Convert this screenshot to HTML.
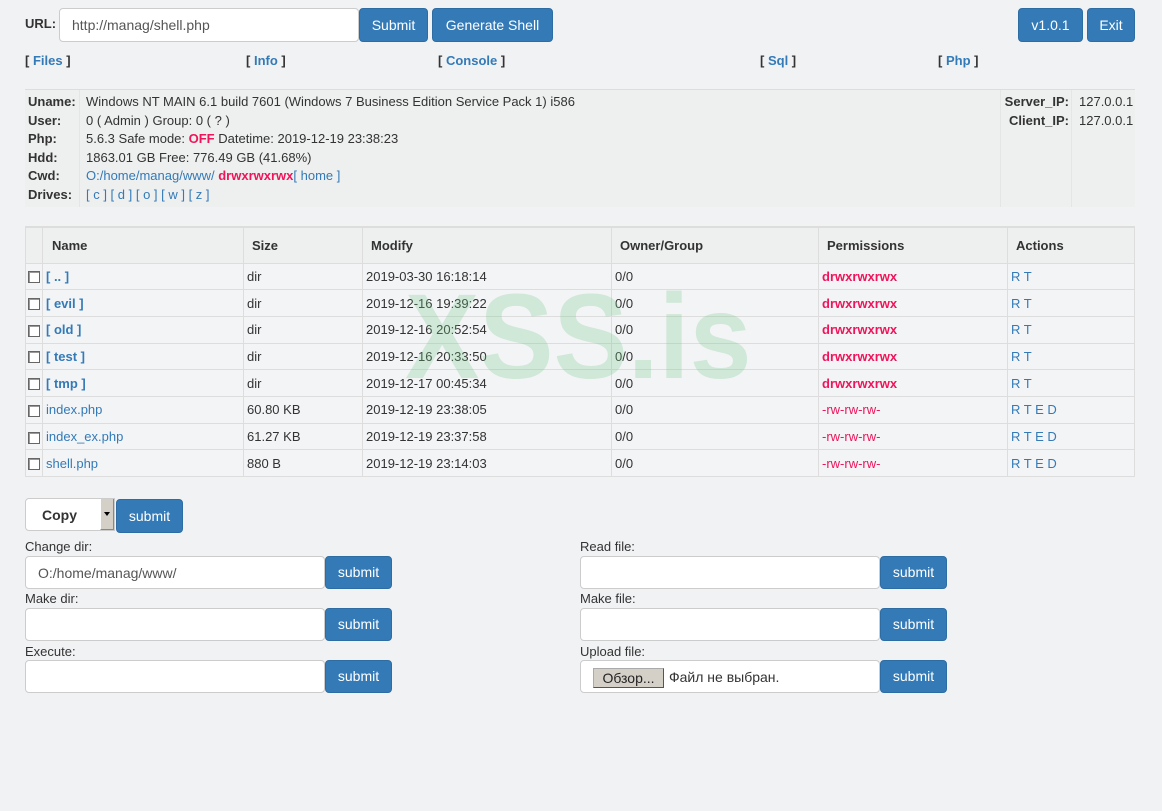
<!DOCTYPE html>
<html><head><meta charset="utf-8"><style>
*{box-sizing:border-box;margin:0;padding:0}
body{width:1162px;height:811px;background:#f1f2f4;font-family:"Liberation Sans",Arial,sans-serif;font-size:13px;color:#333;position:relative;overflow:hidden}
.a{position:absolute}
.btn{position:absolute;background:#337ab7;color:#fff;border:1px solid #2e6da4;border-radius:4px;font-size:14px;text-align:center}
.inp{position:absolute;background:#fff;border:1px solid #ccc;border-radius:4px;font-size:14px;color:#555}
.nav{position:absolute;top:53px;font-weight:bold;font-size:13px;color:#333}
.nav span{color:#337ab7}
.lbl{position:absolute;font-size:13px;color:#333}
a,.lk{color:#337ab7;text-decoration:none}
.pk{color:#f0145a;font-weight:bold}
table{border-collapse:collapse}
td{border:1px solid #ddd;padding:0 3px;height:26.7px;font-size:13px;vertical-align:middle}
th{border:1px solid #ddd;border-top:2px solid #ddd;text-align:left;font-size:13px;color:#333;height:36px;background:#eeefef;padding:0 8px}
tr.r td{background:#f3f4f6}
.cb{display:inline-block;width:12px;height:12px;border:1px solid #666;background:#fff;box-shadow:inset 1px 1px 0 #999;vertical-align:middle}
.dn{color:#337ab7;font-weight:bold}
</style></head><body>
<div class="a" style="left:25px;top:16px;font-weight:bold;font-size:13px">URL:</div>
<div class="inp" style="left:59px;top:8px;width:300px;height:34px;padding:8px 12px">http://manag/shell.php</div>
<div class="btn" style="left:359px;top:8px;width:69px;height:34px;line-height:32px">Submit</div>
<div class="btn" style="left:432px;top:8px;width:121px;height:34px;line-height:32px">Generate Shell</div>
<div class="btn" style="left:1018px;top:8px;width:65px;height:34px;line-height:32px">v1.0.1</div>
<div class="btn" style="left:1087px;top:8px;width:48px;height:34px;line-height:32px">Exit</div>

<div class="nav" style="left:25px">[ <span>Files</span> ]</div>
<div class="nav" style="left:246px">[ <span>Info</span> ]</div>
<div class="nav" style="left:438px">[ <span>Console</span> ]</div>
<div class="nav" style="left:760px">[ <span>Sql</span> ]</div>
<div class="nav" style="left:938px">[ <span>Php</span> ]</div>

<div class="a" style="left:25px;top:89px;width:1110px;height:118px;background:#eeefef;border-top:1px solid #ddd"></div>
<div class="a" style="left:79px;top:90px;width:1px;height:117px;background:#e4e5e5"></div>
<div class="a" style="left:1000px;top:90px;width:1px;height:117px;background:#e4e5e5"></div>
<div class="a" style="left:1071px;top:90px;width:1px;height:117px;background:#e4e5e5"></div>
<div class="a" style="left:28px;top:93px;font-weight:bold;line-height:18.6px">Uname:<br>User:<br>Php:<br>Hdd:<br>Cwd:<br>Drives:</div>
<div class="a" style="left:86px;top:93px;line-height:18.6px;white-space:nowrap">Windows NT MAIN 6.1 build 7601 (Windows 7 Business Edition Service Pack 1) i586<br>0 ( Admin ) Group: 0 ( ? )<br>5.6.3 Safe mode: <span class="pk">OFF</span> Datetime: 2019-12-19 23:38:23<br>1863.01 GB Free: 776.49 GB (41.68%)<br><span class="lk">O:/home/manag/www/</span> <span class="pk">drwxrwxrwx</span><span class="lk">[ home ]</span><br><span class="lk">[ c ] [ d ] [ o ] [ w ] [ z ]</span></div>
<div class="a" style="left:990px;top:93px;width:79px;text-align:right;font-weight:bold;line-height:18.6px">Server_IP:<br>Client_IP:</div>
<div class="a" style="left:1079px;top:93px;line-height:18.6px">127.0.0.1<br>127.0.0.1</div>

<table class="a" style="left:25px;top:226px;width:1110px">
<tr><th style="width:17px;padding:0"></th><th style="width:201px;padding-left:9px">Name</th><th style="width:119px">Size</th><th style="width:249px">Modify</th><th style="width:207px">Owner/Group</th><th style="width:189px">Permissions</th><th>Actions</th></tr>
<tr class="r"><td style="padding:0 2px"><span class="cb"></span></td><td><span class="dn">[ .. ]</span></td><td>dir</td><td>2019-03-30 16:18:14</td><td>0/0</td><td class="pk">drwxrwxrwx</td><td class="lk">R T</td></tr>
<tr class="r"><td style="padding:0 2px"><span class="cb"></span></td><td><span class="dn">[ evil ]</span></td><td>dir</td><td>2019-12-16 19:39:22</td><td>0/0</td><td class="pk">drwxrwxrwx</td><td class="lk">R T</td></tr>
<tr class="r"><td style="padding:0 2px"><span class="cb"></span></td><td><span class="dn">[ old ]</span></td><td>dir</td><td>2019-12-16 20:52:54</td><td>0/0</td><td class="pk">drwxrwxrwx</td><td class="lk">R T</td></tr>
<tr class="r"><td style="padding:0 2px"><span class="cb"></span></td><td><span class="dn">[ test ]</span></td><td>dir</td><td>2019-12-16 20:33:50</td><td>0/0</td><td class="pk">drwxrwxrwx</td><td class="lk">R T</td></tr>
<tr class="r"><td style="padding:0 2px"><span class="cb"></span></td><td><span class="dn">[ tmp ]</span></td><td>dir</td><td>2019-12-17 00:45:34</td><td>0/0</td><td class="pk">drwxrwxrwx</td><td class="lk">R T</td></tr>
<tr class="r"><td style="padding:0 2px"><span class="cb"></span></td><td class="lk">index.php</td><td>60.80 KB</td><td>2019-12-19 23:38:05</td><td>0/0</td><td class="pk" style="font-weight:normal">-rw-rw-rw-</td><td class="lk">R T E D</td></tr>
<tr class="r"><td style="padding:0 2px"><span class="cb"></span></td><td class="lk">index_ex.php</td><td>61.27 KB</td><td>2019-12-19 23:37:58</td><td>0/0</td><td class="pk" style="font-weight:normal">-rw-rw-rw-</td><td class="lk">R T E D</td></tr>
<tr class="r"><td style="padding:0 2px"><span class="cb"></span></td><td class="lk">shell.php</td><td>880 B</td><td>2019-12-19 23:14:03</td><td>0/0</td><td class="pk" style="font-weight:normal">-rw-rw-rw-</td><td class="lk">R T E D</td></tr>
</table>
<div class="a" style="left:405px;top:266px;font-size:121px;font-weight:bold;color:rgba(120,200,135,0.28);transform:scaleX(0.92);transform-origin:left top;line-height:140px;pointer-events:none">XSS.is</div>

<div class="a" style="left:25px;top:498px;width:90px;height:33px;background:#fff;border:1px solid #ccc;border-radius:4px 0 0 4px"></div>
<div class="a" style="left:42px;top:507px;font-weight:bold;font-size:14px">Copy</div>
<div class="a" style="left:100px;top:499px;width:14px;height:31px;background:#d4d0c8;border-left:1px solid #fff;border-right:1px solid #888;border-bottom:1px solid #888"></div>
<div class="a" style="left:104px;top:512px;width:0;height:0;border-left:3px solid transparent;border-right:3px solid transparent;border-top:4px solid #000"></div>
<div class="btn" style="left:116px;top:499px;width:67px;height:34px;line-height:32px">submit</div>

<div class="lbl" style="left:25px;top:539px">Change dir:</div>
<div class="inp" style="left:25px;top:556px;width:300px;height:33px;padding:8px 12px">O:/home/manag/www/</div>
<div class="btn" style="left:325px;top:556px;width:67px;height:33px;line-height:31px">submit</div>
<div class="lbl" style="left:25px;top:591px">Make dir:</div>
<div class="inp" style="left:25px;top:608px;width:300px;height:33px"></div>
<div class="btn" style="left:325px;top:608px;width:67px;height:33px;line-height:31px">submit</div>
<div class="lbl" style="left:25px;top:644px">Execute:</div>
<div class="inp" style="left:25px;top:660px;width:300px;height:33px"></div>
<div class="btn" style="left:325px;top:660px;width:67px;height:33px;line-height:31px">submit</div>

<div class="lbl" style="left:580px;top:539px">Read file:</div>
<div class="inp" style="left:580px;top:556px;width:300px;height:33px"></div>
<div class="btn" style="left:880px;top:556px;width:67px;height:33px;line-height:31px">submit</div>
<div class="lbl" style="left:580px;top:591px">Make file:</div>
<div class="inp" style="left:580px;top:608px;width:300px;height:33px"></div>
<div class="btn" style="left:880px;top:608px;width:67px;height:33px;line-height:31px">submit</div>
<div class="lbl" style="left:580px;top:644px">Upload file:</div>
<div class="inp" style="left:580px;top:660px;width:300px;height:33px"></div>
<div class="a" style="left:593px;top:668px;width:71px;height:20px;background:#d4d0c8;border:1px solid #aaa;border-bottom-color:#555;border-right-color:#555;font-size:14px;text-align:center;line-height:18px;color:#222">Обзор...</div>
<div class="a" style="left:669px;top:669px;font-size:14px;color:#333;font-family:'Liberation Sans','DejaVu Sans',sans-serif">Файл не выбран.</div>
<div class="btn" style="left:880px;top:660px;width:67px;height:33px;line-height:31px">submit</div>
</body></html>
